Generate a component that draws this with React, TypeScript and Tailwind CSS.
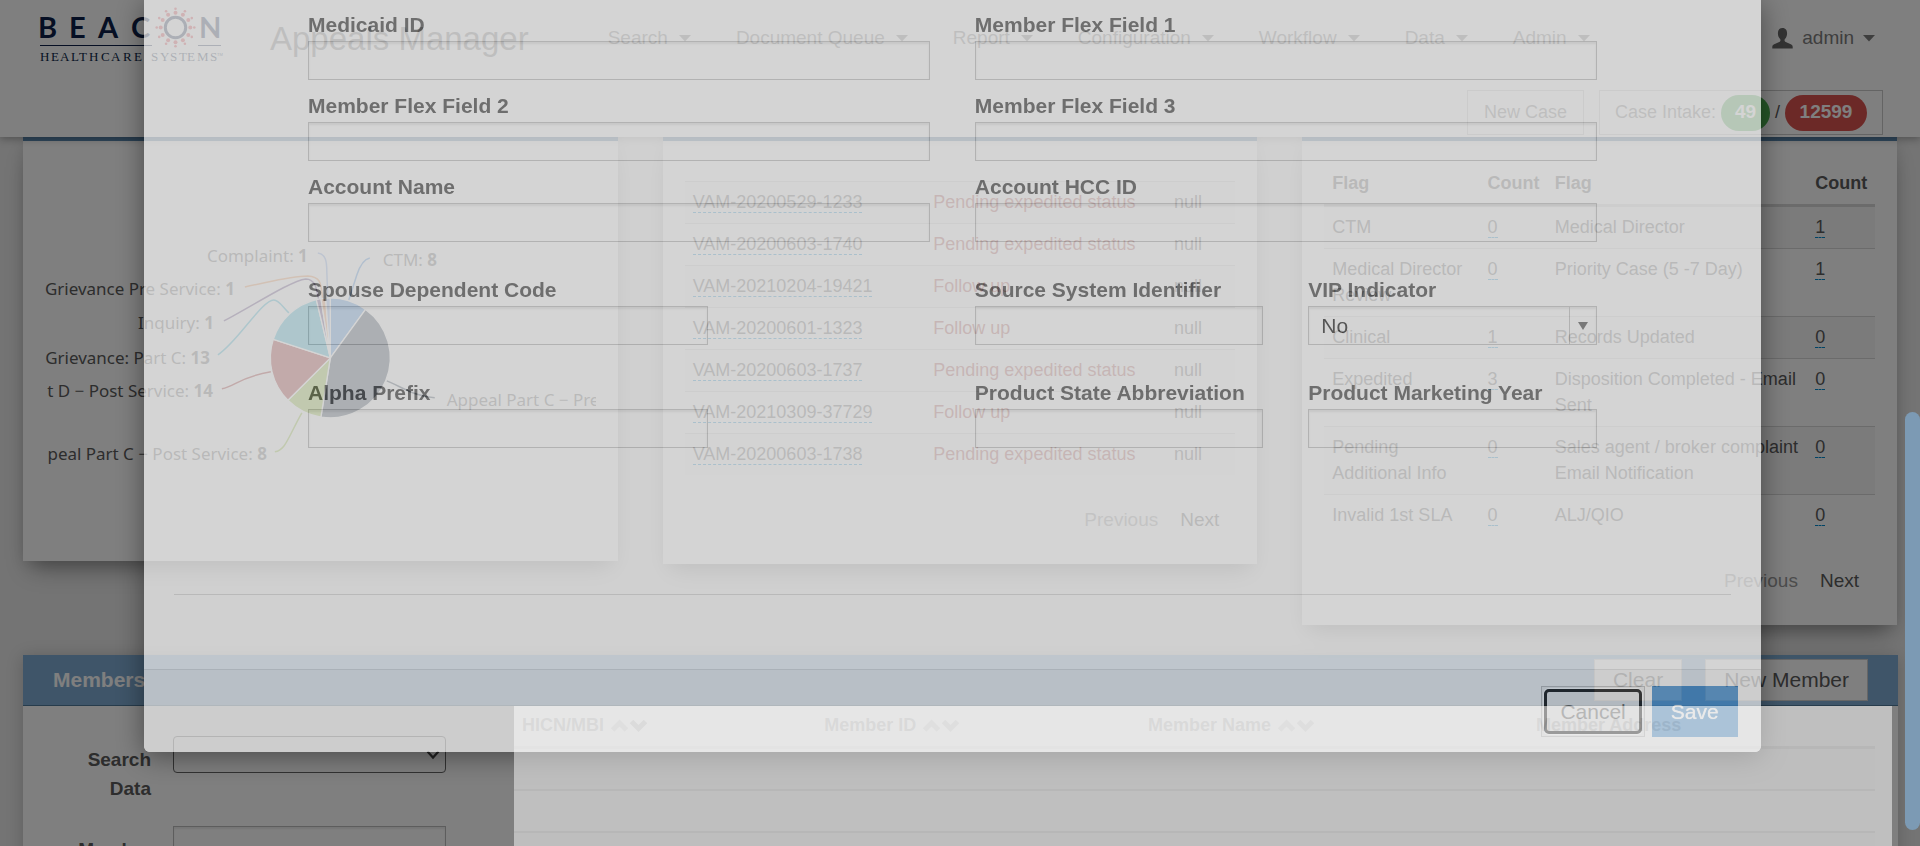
import React from "react";

const NAV = ["Search", "Document Queue", "Report", "Configuration", "Workflow", "Data", "Admin"];

const CASES = [
  ["VAM-20200529-1233", "Pending expedited status"],
  ["VAM-20200603-1740", "Pending expedited status"],
  ["VAM-20210204-19421", "Follow up"],
  ["VAM-20200601-1323", "Follow up"],
  ["VAM-20200603-1737", "Pending expedited status"],
  ["VAM-20210309-37729", "Follow up"],
  ["VAM-20200603-1738", "Pending expedited status"],
];

const FLAGS = [
  ["CTM", "0", "Medical Director", "1"],
  ["Medical Director Review", "0", "Priority Case (5 -7 Day)", "1"],
  ["Clinical", "1", "Records Updated", "0"],
  ["Expedited", "3", "Disposition Completed - Email Sent", "0"],
  ["Pending Additional Info", "0", "Sales agent / broker complaint Email Notification", "0"],
  ["Invalid 1st SLA", "0", "ALJ/QIO", "0"],
];

const SLICES = [
  { value: 8, color: "#2f7ed8" },
  { value: 34, color: "#0d233a" },
  { value: 8, color: "#8bbc21" },
  { value: 14, color: "#910000" },
  { value: 13, color: "#1aadce" },
  { value: 1, color: "#492970" },
  { value: 1, color: "#f28f43" },
  { value: 1, color: "#77a1e5" },
];

const CONNECTORS = [
  { d: "M370 258 C365 259 360 266 357 275 L349 300", color: "#2f7ed8" },
  { d: "M387 381 C402 387 413 396 435 398", color: "#0d233a" },
  { d: "M275 452 C286 450 288 438 302 413", color: "#8bbc21" },
  { d: "M222 389 C236 386 240 377 271 372", color: "#910000" },
  { d: "M218 355 C238 342 262 300 274 300 C279 300 282 306 289 313", color: "#1aadce" },
  { d: "M224 321 C250 308 290 281 306 279 C315 279 317 288 319 301", color: "#492970" },
  { d: "M245 287 C270 282 290 276 308 276 C322 277 321 284 323 300", color: "#f28f43" },
  { d: "M318 253 C326 254 327 262 327 272 L328 299", color: "#77a1e5" },
];

function Caret() {
  return (
    <svg width="12" height="7" viewBox="0 0 12 7" fill="currentColor" aria-hidden="true">
      <path d="M0 0h12L6 6.5z" />
    </svg>
  );
}

function Logo() {
  const rays = Array.from({ length: 12 }, (_, i) => (i * Math.PI) / 6);
  return (
    <svg width="230" height="77" viewBox="0 0 230 77" className="shrink-0" role="img" aria-label="Beacon Healthcare Systems">
      <g fill="#0c1f48">
        <text y="38" x="38 69 98 131" fontFamily="Lato, sans-serif" fontWeight="700" fontSize="29">BEAC</text>
        <text y="38" x="199" fontFamily="Lato, sans-serif" fontWeight="700" fontSize="29">N</text>
        <text y="61" x="40 51 60 71 79 89 101 111 123 134 145 151 160 170 179 187 197 210" fontFamily="Liberation Serif, serif" fontSize="13">
          HEALTHCARE SYSTEMS
        </text>
        <text y="56" x="217" fontFamily="Liberation Sans, sans-serif" fontSize="4">TM</text>
        <rect x="40" y="45" width="112" height="1" />
        <rect x="198" y="45" width="23" height="1" />
      </g>
      <circle cx="175.500" cy="27.500" r="10.200" fill="none" stroke="#0c1f48" strokeWidth="3" />
      <g fill="#e0343c">
        {rays.map((a, i) => (
          <g key={i}>
            <circle cx={175.5 + 14.8 * Math.cos(a)} cy={27.5 + 14.8 * Math.sin(a)} r="2" />
            <circle cx={175.5 + 18.8 * Math.cos(a)} cy={27.5 + 18.8 * Math.sin(a)} r="1.300" />
          </g>
        ))}
      </g>
    </svg>
  );
}

function Header() {
  return (
    <header className="relative z-10 bg-white pb-0.5 text-[19px] text-[#7c7c7c] shadow-[0_2px_8px_rgba(0,0,0,0.3)]">
      <div className="flex h-[77px] items-center">
        <Logo />
        <h1 className="ml-10 text-[33px] whitespace-nowrap">Appeals Manager</h1>
        <nav className="ml-[79px] flex gap-[45px]">
          {NAV.map((n) => (
            <a key={n} href="#" className="flex items-center gap-[11px] whitespace-nowrap">
              {n}
              <Caret />
            </a>
          ))}
        </nav>
        <a href="#" className="mr-[45px] ml-auto flex items-center gap-[9px]">
          <svg width="21" height="21" viewBox="0 0 21 21" fill="currentColor" className="text-[#666]" aria-hidden="true">
            <path d="M10.500 0c3.200 0 4.600 2.300 4.600 5.200 0 2.300-.8 4.500-2.200 5.900-.6.700-.5 2.100.3 2.600l5.600 2.600c1.200.6 1.900 1.400 1.900 2.600V20.500H.3v-1.600c0-1.200.7-2 1.900-2.600l5.600-2.600c.8-.5.9-1.900.3-2.600C6.700 9.700 5.900 7.500 5.900 5.200 5.900 2.300 7.300 0 10.500 0z" />
          </svg>
          admin
          <Caret />
        </a>
      </div>
      <div className="mt-[13px] mr-[37px] flex h-[45px] justify-end gap-[15px] text-[18px]">
        <button className="border border-[#c8c8c8] px-4">New Case</button>
        <button className="flex items-center border border-[#c8c8c8] px-[15px]">
          Case Intake:
          <span className="ml-[5px] flex h-9 w-[49px] items-center justify-center rounded-full bg-[#4caf50] text-[19px] font-bold text-white">49</span>
          <span className="w-[15px] text-center text-[#555]">/</span>
          <span className="flex h-9 w-[82px] items-center justify-center rounded-full bg-[#d9534f] text-[19px] font-bold text-white">12599</span>
        </button>
      </div>
    </header>
  );
}

function Card({ children }: { children: React.ReactNode }) {
  return (
    <section className="border-t-4 border-[#5e8cb4] bg-white px-[22px] shadow-[0_14px_22px_-8px_rgba(0,0,0,0.4),0_2px_14px_rgba(0,0,0,0.08)]">
      {children}
    </section>
  );
}

function Pager() {
  return (
    <div className="mt-[30px] flex justify-end gap-[22px] pr-4 pb-[30px] text-[19px] leading-[29px]">
      <button className="text-[#999]" disabled>Previous</button>
      <button>Next</button>
    </div>
  );
}

function PieChart() {
  const total = SLICES.reduce((s, p) => s + p.value, 0);
  const cx = 330.5;
  const cy = 358;
  const r = 60;
  let start = 0;
  const paths = SLICES.map((s) => {
    const a0 = (start / total) * 2 * Math.PI;
    start += s.value;
    const a1 = (start / total) * 2 * Math.PI;
    const large = a1 - a0 > Math.PI ? 1 : 0;
    return {
      color: s.color,
      d: `M${cx} ${cy} L${cx + r * Math.sin(a0)} ${cy - r * Math.cos(a0)} A${r} ${r} 0 ${large} 1 ${cx + r * Math.sin(a1)} ${cy - r * Math.cos(a1)} Z`,
    };
  });
  return (
    <svg viewBox="45 141 551 420" className="block w-full" fontFamily="Noto Sans, sans-serif" fontSize="17" fill="#5a5a5a" role="img" aria-label="Cases by type">
      {CONNECTORS.map((c) => (
        <path key={c.color} d={c.d} fill="none" stroke={c.color} strokeWidth="1.500" />
      ))}
      {paths.map((p) => (
        <path key={p.color} d={p.d} fill={p.color} stroke="#fff" strokeWidth="1.300" />
      ))}
      <text x="308" y="262" textAnchor="end">Complaint: <tspan fontWeight="700">1</tspan></text>
      <text x="383" y="266">CTM: <tspan fontWeight="700">8</tspan></text>
      <text x="235" y="295" textAnchor="end">Grievance Pre Service: <tspan fontWeight="700">1</tspan></text>
      <text x="214" y="329" textAnchor="end">Inquiry: <tspan fontWeight="700">1</tspan></text>
      <text x="210" y="364" textAnchor="end">Grievance: Part C: <tspan fontWeight="700">13</tspan></text>
      <text x="213" y="397" textAnchor="end">t D − Post Service: <tspan fontWeight="700">14</tspan></text>
      <text x="267" y="460" textAnchor="end">peal Part C − Post Service: <tspan fontWeight="700">8</tspan></text>
      <text x="447" y="406">Appeal Part C − Pre</text>
    </svg>
  );
}

const CELL = "border-t border-[#d6d6d6] px-2 pt-[7px] pb-2 align-top";

function CountLink({ n }: { n: string }) {
  return <a href="#" className="border-b border-dashed border-[#0088cc]">{n}</a>;
}

function CasesTable() {
  return (
    <table className="mt-10 w-full table-fixed border-separate border-spacing-0 text-left text-[18px] leading-[26px]">
      <colgroup>
        <col className="w-[43.7%]" />
        <col className="w-[43.7%]" />
        <col />
      </colgroup>
      <tbody>
        {CASES.map(([id, status]) => (
          <tr key={id} className="odd:bg-[#f9f9f9]">
            <td className={CELL}><a href="#" className="border-b border-dashed border-[#0088cc]">{id}</a></td>
            <td className={CELL + " whitespace-nowrap text-[#a94442]"}>{status}</td>
            <td className={CELL}>null</td>
          </tr>
        ))}
      </tbody>
    </table>
  );
}

function FlagsTable() {
  const th = "border-b-[3px] border-[#d6d6d6] px-2 py-2";
  return (
    <table className="mt-[21px] w-full table-fixed border-separate border-spacing-0 text-left text-[18px] leading-[26px]">
      <colgroup>
        <col className="w-[28.2%]" />
        <col className="w-[12.2%]" />
        <col className="w-[47.3%]" />
        <col className="w-[12.3%]" />
      </colgroup>
      <thead>
        <tr>
          <th className={th}>Flag</th>
          <th className={th}>Count</th>
          <th className={th}>Flag</th>
          <th className={th}>Count</th>
        </tr>
      </thead>
      <tbody>
        {FLAGS.map(([a, ac, b, bc]) => (
          <tr key={a} className="odd:bg-[#f7f7f7] [&:first-child>td]:border-t-0">
            <td className={CELL}>{a}</td>
            <td className={CELL}><CountLink n={ac} /></td>
            <td className={CELL}>{b}</td>
            <td className={CELL}><CountLink n={bc} /></td>
          </tr>
        ))}
      </tbody>
    </table>
  );
}

function SortArrows({ down }: { down?: boolean }) {
  return (
    <svg width="37" height="14" viewBox="0 0 37 14" fill="none" strokeWidth="5" className="ml-[7px] inline-block" aria-hidden="true">
      <path d="M1.500 11 L8.500 4 L15.500 11" stroke="#aaa" />
      <path d="M20.500 2.500 L27.500 9.500 L34.500 2.500" stroke={down ? "#777" : "#a0a0a0"} />
    </svg>
  );
}

function Members() {
  const th = "border-b-[3px] border-[#ddd] px-2 pt-1.5 pb-2 whitespace-nowrap";
  return (
    <section className="mx-[22px] mt-[30px] ml-[23px] bg-white shadow-[0_2px_16px_rgba(0,0,0,0.2)]">
      <div className="flex h-[51px] items-center border-b border-[#4f7899] bg-[#7eabd2] px-[30px] text-[21px]">
        <h2 className="font-bold text-white">Members</h2>
        <button className="ml-auto h-[42px] border border-[#ccc] bg-white px-[18px]">Clear</button>
        <button className="ml-[23px] h-[42px] border border-[#ccc] bg-white px-[18px]">New Member</button>
      </div>
      <div className="flex pr-1.5">
        <form className="grid w-[491px] shrink-0 auto-rows-[90px] grid-cols-[128px_273px] gap-x-[22px] pt-[30px] text-[19px] leading-[29px]">
          <label htmlFor="searchData" className="pt-[9px] pl-10 text-right font-bold">Search Data</label>
          <div className="relative h-[37px]">
            <select id="searchData" className="h-full w-full appearance-none rounded-sm border border-[#666] bg-transparent">
              <option></option>
            </select>
            <svg width="14" height="10" viewBox="0 0 14 10" fill="none" stroke="#444" strokeWidth="2.200" className="pointer-events-none absolute top-3.5 right-1.5" aria-hidden="true">
              <path d="M1.500 1.500 L7 7.500 L12.500 1.500" />
            </svg>
          </div>
          <label htmlFor="memberNo" className="pt-[9px] pl-10 text-right font-bold">Member ID</label>
          <input id="memberNo" className="h-[39px] w-full border border-[#bbb] bg-transparent shadow-[inset_0_2px_2px_rgba(0,0,0,0.08)]" />
        </form>
        <div className="relative flex-1 pr-[17px]">
          <table className="w-full table-fixed border-separate border-spacing-0 text-left text-[18px] leading-[26px]">
            <colgroup>
              <col className="w-[22.2%]" />
              <col className="w-[23.8%]" />
              <col className="w-[28.5%]" />
              <col />
            </colgroup>
            <thead>
              <tr>
                <th className={th}>HICN/MBI<SortArrows down /></th>
                <th className={th}>Member ID<SortArrows /></th>
                <th className={th}>Member Name<SortArrows /></th>
                <th className={th}>Member Address</th>
              </tr>
            </thead>
            <tbody>
              {[0, 1, 2].map((i) => (
                <tr key={i} className="odd:bg-[#f8f8f8]">
                  {[0, 1, 2, 3].map((j) => (
                    <td key={j} className="h-[42px] border-b-2 border-[#dedede]" />
                  ))}
                </tr>
              ))}
            </tbody>
          </table>
          <div className="pointer-events-none absolute inset-0 z-50 bg-white/50" />
        </div>
      </div>
    </section>
  );
}

const INPUT = "block h-[39px] w-full border border-[#ccc] bg-transparent px-3 text-[21px] text-[#444] shadow-[inset_0_2px_2px_rgba(0,0,0,0.075)]";

function Field({ label, id }: { label: string; id: string }) {
  return (
    <div>
      <label htmlFor={id} className="mb-1 block leading-[25px] font-bold whitespace-nowrap">{label}</label>
      <input id={id} className={INPUT} />
    </div>
  );
}

function Modal() {
  return (
    <div role="dialog" aria-modal="true" aria-label="New Member" className="fixed top-0 left-[7.5%] z-40 w-[84.2%] rounded-b-[6px] bg-white text-[21px] text-[#666] opacity-[0.67] shadow-[0_4px_28px_rgba(0,0,0,0.65)]">
      <div className="px-[164px] pt-3">
        <div className="grid grid-cols-2 gap-x-[45px] gap-y-[13px]">
          <Field id="medicaid" label="Medicaid ID" />
          <Field id="flex1" label="Member Flex Field 1" />
          <Field id="flex2" label="Member Flex Field 2" />
          <Field id="flex3" label="Member Flex Field 3" />
          <Field id="account" label="Account Name" />
          <Field id="hcc" label="Account HCC ID" />
        </div>
        <div className="mt-[35px] grid grid-cols-2 gap-x-[45px] gap-y-[35px]">
          <div className="w-[64.3%]"><Field id="spouse" label="Spouse Dependent Code" /></div>
          <div className="grid grid-cols-2 gap-x-[45px]">
            <Field id="source" label="Source System Identifier" />
            <div>
              <label htmlFor="vip" className="mb-1 block leading-[25px] font-bold">VIP Indicator</label>
              <div className="relative">
                <select id="vip" className={INPUT + " appearance-none"}>
                  <option>No</option>
                  <option>Yes</option>
                </select>
                <span className="pointer-events-none absolute inset-y-0 right-0 flex w-7 items-center justify-center border-l border-[#ccc]">
                  <svg width="10" height="8" viewBox="0 0 10 8" fill="#777" aria-hidden="true"><path d="M0 0h10L5 8z" /></svg>
                </span>
              </div>
            </div>
          </div>
          <div className="w-[64.3%]"><Field id="alpha" label="Alpha Prefix" /></div>
          <div className="grid grid-cols-2 gap-x-[45px]">
            <Field id="state" label="Product State Abbreviation" />
            <Field id="year" label="Product Marketing Year" />
          </div>
        </div>
      </div>
      <hr className="mx-[30px] mt-[146px] mb-[74px] border-t border-[#ddd]" />
      <div className="flex justify-end gap-[7px] rounded-b-[6px] border-t border-[#e0e0e0] bg-[#f5f5f5] pt-4 pr-[23px] pb-[15px]">
        <button className="relative h-[51px] border border-[#bbb] bg-[#ebebeb] px-[18px] text-[#666]">
          Cancel
          <span className="absolute inset-0.5 rounded-[5px] border-[3px] border-[#101010] shadow-[0_0_0_1px_#fff]" />
        </button>
        <button className="h-[51px] border border-[#428bca] bg-[#428bca] px-[18px] text-white [text-shadow:0_0_1px_#fff]">Save</button>
      </div>
    </div>
  );
}

export default function App() {
  return (
    <div className="h-screen overflow-hidden bg-[#e8e8e8] font-['Liberation_Sans',Arial,sans-serif] text-[#5a5a5a]">
      <Header />
      <main>
        <div className="grid grid-cols-3 items-start gap-[45px] px-[23px]">
          <Card><PieChart /></Card>
          <Card>
            <CasesTable />
            <Pager />
          </Card>
          <Card>
            <FlagsTable />
            <Pager />
          </Card>
        </div>
        <Members />
      </main>
      <div className="fixed inset-0 z-30 bg-black/50" />
      <Modal />
      <div className="fixed top-[412px] right-0 z-50 h-[418px] w-[15px] rounded-full bg-[#7c9ab4]" />
    </div>
  );
}
